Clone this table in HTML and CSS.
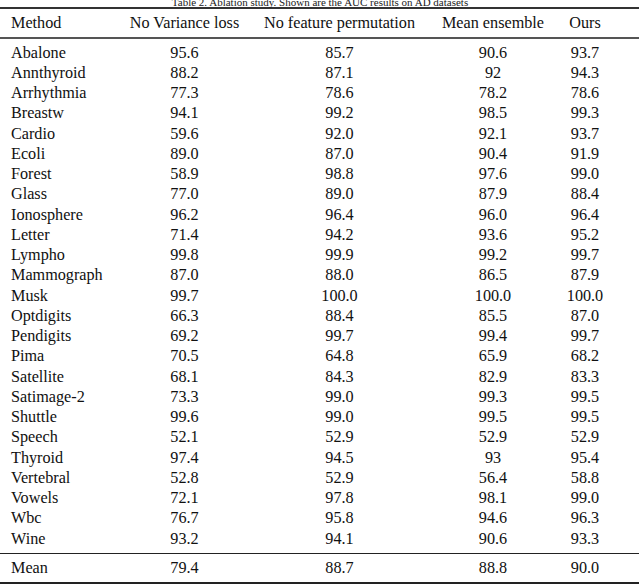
FILE: index.html
```html
<!DOCTYPE html>
<html>
<head>
<meta charset="utf-8">
<link rel="stylesheet" href="styles.css">
</head>
<body>
<div class="caption">Table 2. Ablation study. Shown are the AUC results on AD datasets</div>
<div class="table">
  <div class="row head"><span>Method</span><span>No Variance loss</span><span>No feature permutation</span><span>Mean ensemble</span><span>Ours</span></div>
  <div class="body">
    <div class="row"><span>Abalone</span><span>95.6</span><span>85.7</span><span>90.6</span><span>93.7</span></div>
    <div class="row"><span>Annthyroid</span><span>88.2</span><span>87.1</span><span>92</span><span>94.3</span></div>
    <div class="row"><span>Arrhythmia</span><span>77.3</span><span>78.6</span><span>78.2</span><span>78.6</span></div>
    <div class="row"><span>Breastw</span><span>94.1</span><span>99.2</span><span>98.5</span><span>99.3</span></div>
    <div class="row"><span>Cardio</span><span>59.6</span><span>92.0</span><span>92.1</span><span>93.7</span></div>
    <div class="row"><span>Ecoli</span><span>89.0</span><span>87.0</span><span>90.4</span><span>91.9</span></div>
    <div class="row"><span>Forest</span><span>58.9</span><span>98.8</span><span>97.6</span><span>99.0</span></div>
    <div class="row"><span>Glass</span><span>77.0</span><span>89.0</span><span>87.9</span><span>88.4</span></div>
    <div class="row"><span>Ionosphere</span><span>96.2</span><span>96.4</span><span>96.0</span><span>96.4</span></div>
    <div class="row"><span>Letter</span><span>71.4</span><span>94.2</span><span>93.6</span><span>95.2</span></div>
    <div class="row"><span>Lympho</span><span>99.8</span><span>99.9</span><span>99.2</span><span>99.7</span></div>
    <div class="row"><span>Mammograph</span><span>87.0</span><span>88.0</span><span>86.5</span><span>87.9</span></div>
    <div class="row"><span>Musk</span><span>99.7</span><span>100.0</span><span>100.0</span><span>100.0</span></div>
    <div class="row"><span>Optdigits</span><span>66.3</span><span>88.4</span><span>85.5</span><span>87.0</span></div>
    <div class="row"><span>Pendigits</span><span>69.2</span><span>99.7</span><span>99.4</span><span>99.7</span></div>
    <div class="row"><span>Pima</span><span>70.5</span><span>64.8</span><span>65.9</span><span>68.2</span></div>
    <div class="row"><span>Satellite</span><span>68.1</span><span>84.3</span><span>82.9</span><span>83.3</span></div>
    <div class="row"><span>Satimage-2</span><span>73.3</span><span>99.0</span><span>99.3</span><span>99.5</span></div>
    <div class="row"><span>Shuttle</span><span>99.6</span><span>99.0</span><span>99.5</span><span>99.5</span></div>
    <div class="row"><span>Speech</span><span>52.1</span><span>52.9</span><span>52.9</span><span>52.9</span></div>
    <div class="row"><span>Thyroid</span><span>97.4</span><span>94.5</span><span>93</span><span>95.4</span></div>
    <div class="row"><span>Vertebral</span><span>52.8</span><span>52.9</span><span>56.4</span><span>58.8</span></div>
    <div class="row"><span>Vowels</span><span>72.1</span><span>97.8</span><span>98.1</span><span>99.0</span></div>
    <div class="row"><span>Wbc</span><span>76.7</span><span>95.8</span><span>94.6</span><span>96.3</span></div>
    <div class="row"><span>Wine</span><span>93.2</span><span>94.1</span><span>90.6</span><span>93.3</span></div>
  </div>
  <div class="row foot"><span>Mean</span><span>79.4</span><span>88.7</span><span>88.8</span><span>90.0</span></div>
</div>
</body>
</html>
```
FILE: styles.css
```css
html, body {
  margin: 0;
  padding: 0;
  background: #fff;
}
body {
  font-family: "Liberation Serif", "Times New Roman", serif;
  color: #111;
  overflow: hidden;
}
.caption {
  font-size: 11px;
  line-height: 12px;
  height: 11px;
  margin-top: -4px;
  text-align: center;
  color: #222;
}
.table {
  width: 639px;
  font-size: 16.2px;
}
.row {
  display: grid;
  grid-template-columns: 115px 139px 171px 136px 48px;
  align-items: center;
  height: 20.25px;
  white-space: nowrap;
}
.row span {
  text-align: center;
  line-height: 18px;
}
.row span:first-child {
  text-align: left;
  padding-left: 11px;
}
.head {
  height: 28px;
  border-top: 2px solid #333;
  border-bottom: 2px solid #555;
}
.body {
  padding-top: 3.5px;
  padding-bottom: 4px;
  border-bottom: 1px solid #222;
}
.foot {
  height: 28.25px;
  border-bottom: 2px solid #222;
}
```
